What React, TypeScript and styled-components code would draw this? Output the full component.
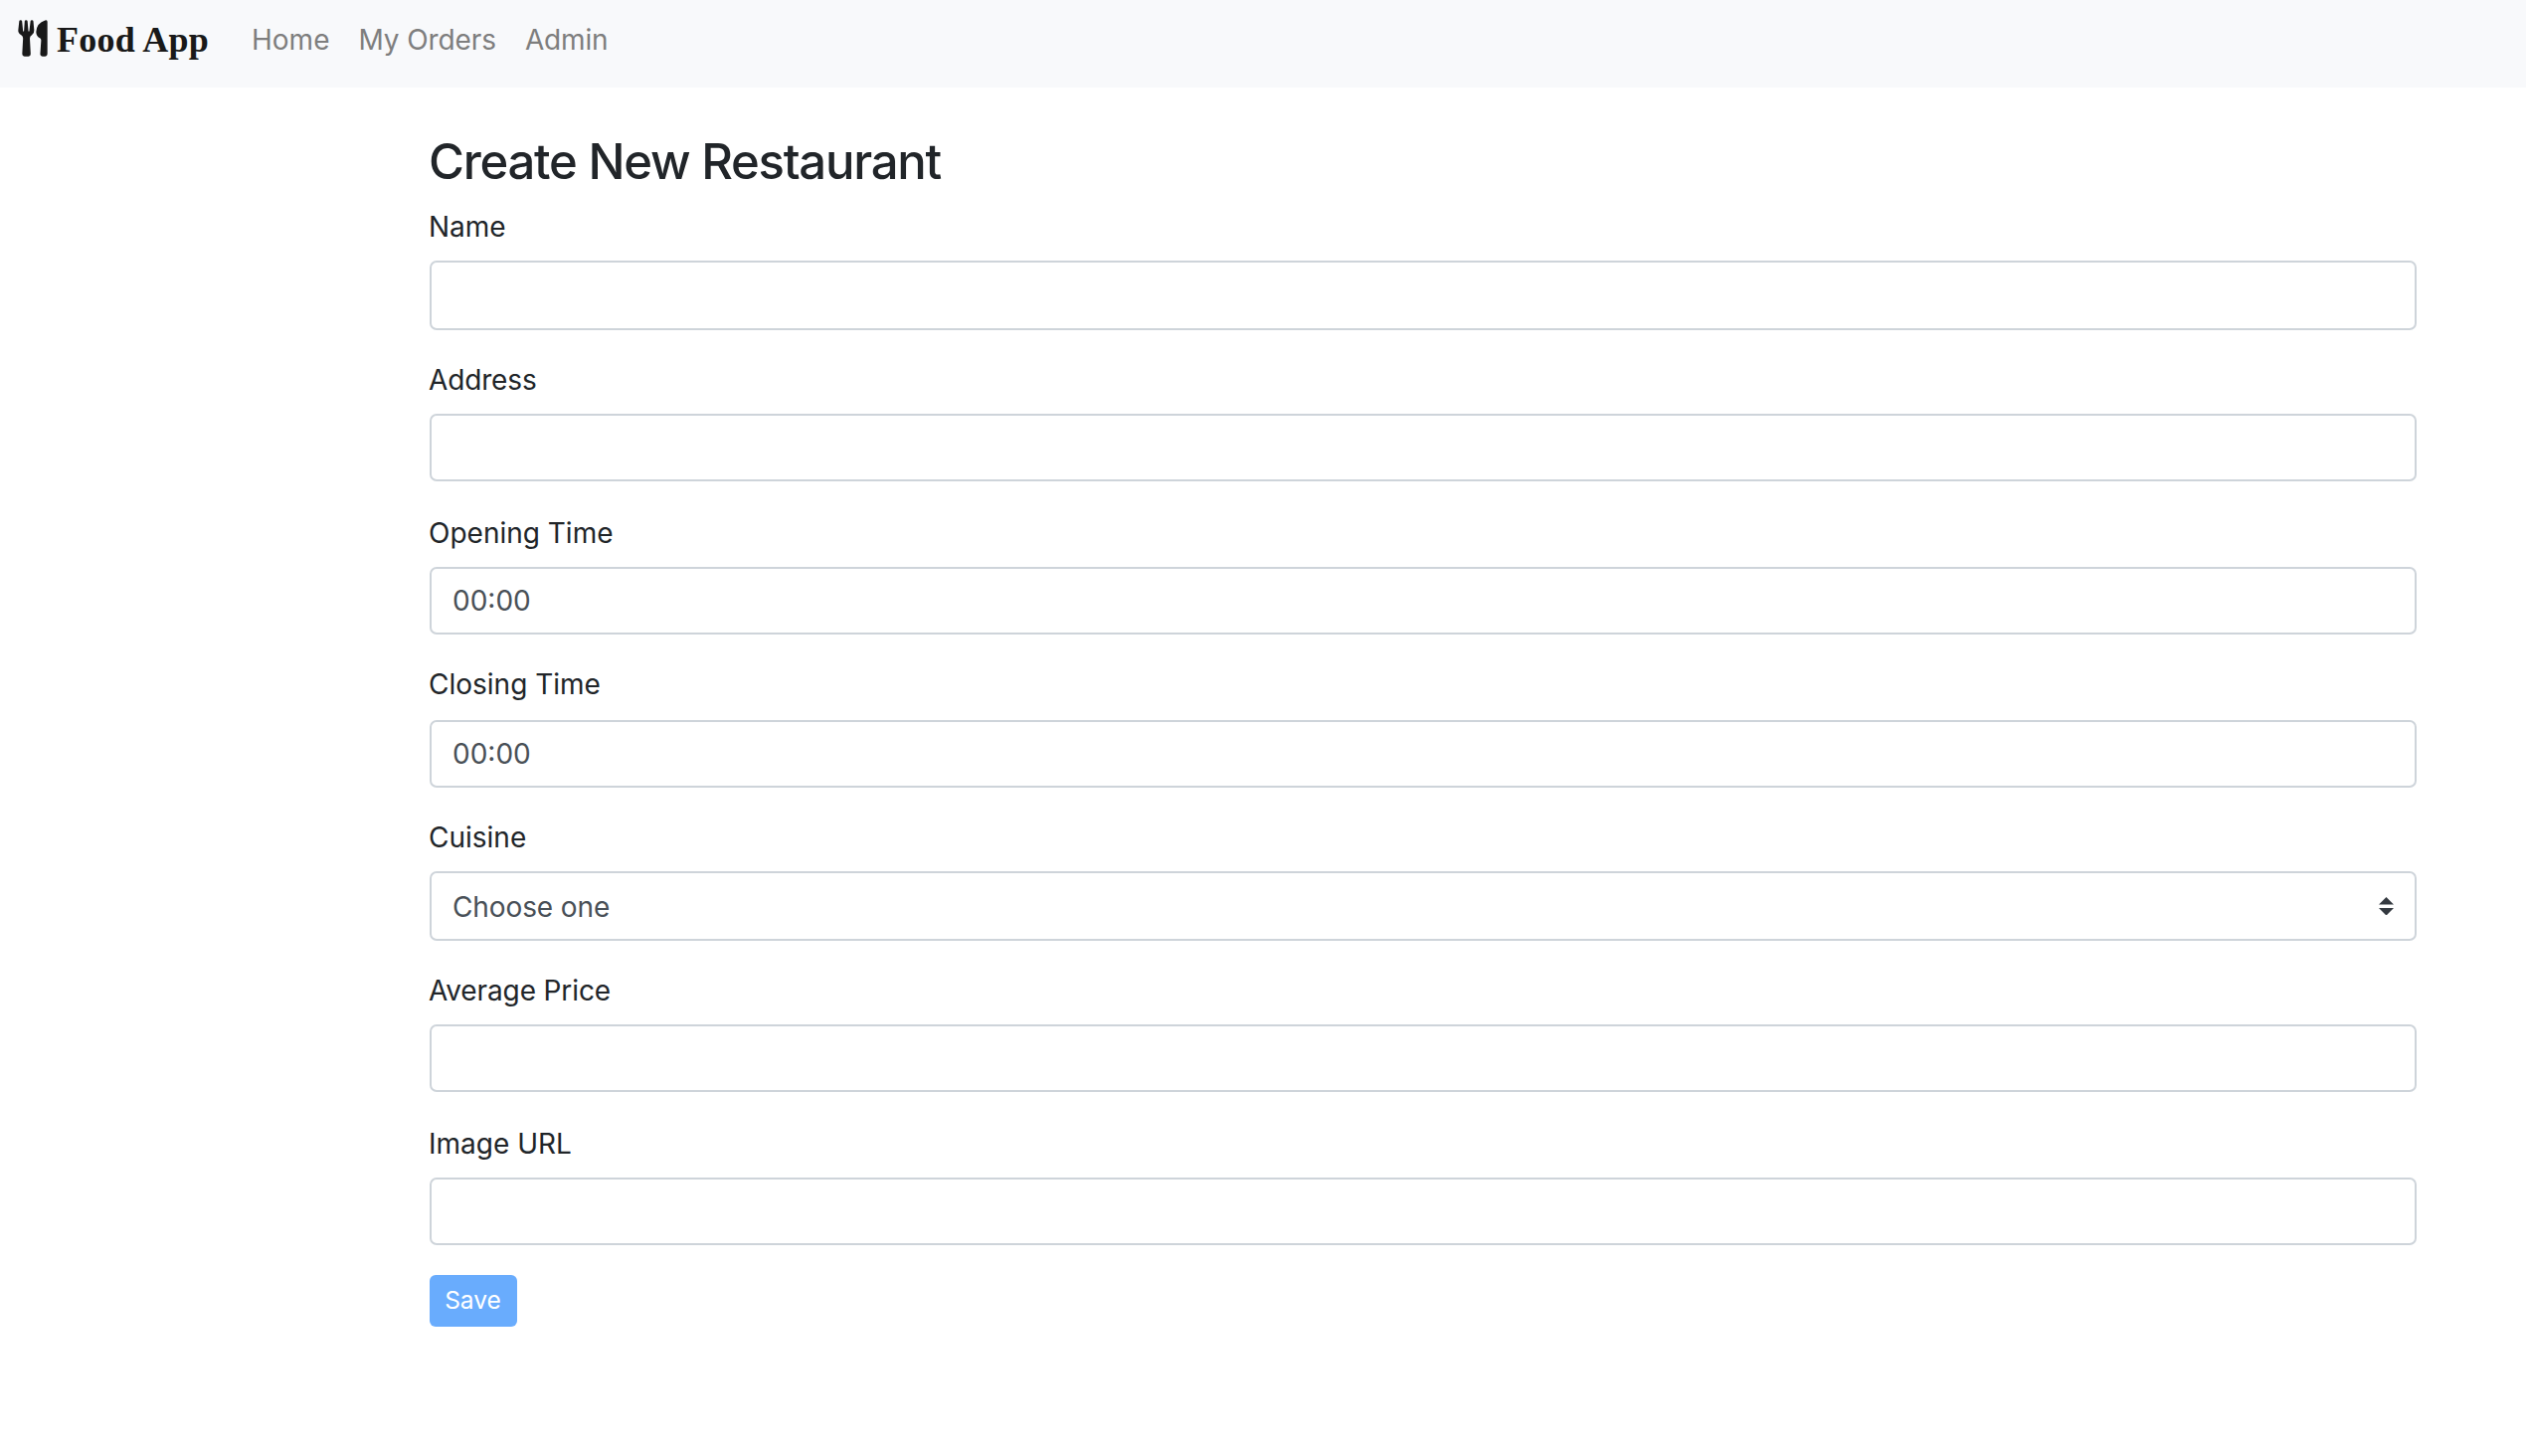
import styled, { createGlobalStyle } from "styled-components";

const GlobalStyle = createGlobalStyle`
  *, *::before, *::after {
    box-sizing: border-box;
  }
  body {
    margin: 0;
    background: #fff;
    color: #212529;
    font-family: Inter, "Liberation Sans", sans-serif;
    font-size: 28px;
    line-height: 24px;
  }
`;

const Navbar = styled.nav`
  display: flex;
  align-items: center;
  height: 88px;
  padding: 0 18px 8px;
  background: #f8f9fb;
`;

const Brand = styled.a`
  display: flex;
  align-items: center;
  gap: 9px;
  width: 235px;
  color: #191919;
  font: 700 36px/40px "Liberation Serif", "Times New Roman", serif;
  letter-spacing: 0.25px;
  text-decoration: none;
  white-space: nowrap;
`;

const BrandMark = styled.svg`
  width: 30px;
  height: 37px;
  margin-bottom: 3px;
  fill: currentColor;
`;

const NavLinks = styled.div`
  display: flex;
  gap: 29px;
`;

const NavLink = styled.a<{ $tracking?: number }>`
  color: #7e7e7e;
  letter-spacing: ${(p) => p.$tracking ?? 0}px;
  text-decoration: none;
  white-space: nowrap;
`;

const Main = styled.main`
  padding: 45px 110px 0 432px;
`;

const Title = styled.h2`
  margin: 0 0 23px -1px;
  font-size: 49px;
  font-weight: 500;
  line-height: 60px;
  letter-spacing: -1.24px;
`;

const Form = styled.form`
  display: flex;
  flex-direction: column;
  align-items: stretch;
`;

const Field = styled.div<{ $height: number }>`
  display: flex;
  flex-direction: column;
  height: ${(p) => p.$height}px;
`;

const Label = styled.label<{ $gap: number; $tracking: number }>`
  margin: 0 0 ${(p) => p.$gap}px -1px;
  letter-spacing: ${(p) => p.$tracking}px;
`;

const Input = styled.input<{ $height: number }>`
  width: 100%;
  height: ${(p) => p.$height}px;
  padding: 0 21px;
  border: 2px solid #ced4da;
  border-radius: 7px;
  background: #fff;
  color: #495057;
  font: inherit;
  outline: none;
`;

const Select = styled.div<{ $height: number }>`
  display: flex;
  align-items: center;
  justify-content: space-between;
  height: ${(p) => p.$height}px;
  padding: 0 21px;
  border: 2px solid #ced4da;
  border-radius: 7px;
  background: #fff;
  color: #495057;
  letter-spacing: -0.1px;
`;

const SelectValue = styled.span`
  padding-top: 2px;
`;

const Caret = styled.svg`
  width: 15px;
  height: 18.5px;
  fill: #343a40;
`;

const SaveButton = styled.button`
  align-self: flex-start;
  width: 88px;
  height: 52px;
  padding: 0 1px 2px 0;
  border: 0;
  border-radius: 6px;
  background: #69acfd;
  color: #fff;
  font: 400 24.5px/36px Inter, "Liberation Sans", sans-serif;
`;

type FieldSpec = {
  id: string;
  label: string;
  value?: string;
  select?: boolean;
  height?: number;
  control?: number;
  gap?: number;
  tracking?: number;
};

const fields: FieldSpec[] = [
  { id: "name", label: "Name", control: 70 },
  { id: "address", label: "Address", tracking: -0.15 },
  { id: "opening", label: "Opening Time", value: "00:00", height: 152 },
  { id: "closing", label: "Closing Time", value: "00:00", gap: 24 },
  { id: "cuisine", label: "Cuisine", value: "Choose one", select: true, control: 70 },
  { id: "price", label: "Average Price", tracking: -0.12 },
  { id: "image", label: "Image URL", height: 144 },
];

function ForkAndKnife() {
  return (
    <BrandMark viewBox="55 60 90 111" preserveAspectRatio="none" aria-hidden="true">
      <path d="M59 64Q59.500 61 63 61Q67 61 67.500 64L70.500 93Q71 95.500 72 95.500Q73.200 95.500 73.400 93L75.500 64Q76 61 79.500 61Q83.500 61 84 64L86.500 93Q86.800 95.500 88 95.500Q89.200 95.500 89.500 93L93 64Q93.500 61 97 61Q101 61 101.500 64L104 91Q105 100 97 106Q90.500 110 91 116L93.500 163Q93.500 170 87 170H75Q68 170 68 163L70.500 116Q71 110 65 106Q55 100 56 91Z" />
      <path d="M137 61.500Q144 59 144 66V163Q144 170 137 170H129Q122 170 122.300 163L125 123Q125.500 117 121 115Q110 109 110 96Q112 69 137 61.500Z" />
    </BrandMark>
  );
}

export default function App() {
  return (
    <>
      <GlobalStyle />
      <Navbar>
        <Brand>
          <ForkAndKnife />
          Food App
        </Brand>
        <NavLinks>
          <NavLink>Home</NavLink>
          <NavLink $tracking={-0.1}>My Orders</NavLink>
          <NavLink $tracking={-0.15}>Admin</NavLink>
        </NavLinks>
      </Navbar>
      <Main>
        <Title>Create New Restaurant</Title>
        <Form onSubmit={(e) => e.preventDefault()}>
          {fields.map((f) => (
            <Field key={f.id} $height={f.height ?? 154}>
              <Label htmlFor={f.id} $gap={f.gap ?? 22} $tracking={f.tracking ?? 0}>
                {f.label}
              </Label>
              {f.select ? (
                <Select id={f.id} $height={f.control ?? 68}>
                  <SelectValue>{f.value}</SelectValue>
                  <Caret viewBox="0 0 4 5" preserveAspectRatio="none">
                    <path d="M2 0L0 2h4zm0 5L0 3h4z" />
                  </Caret>
                </Select>
              ) : (
                <Input id={f.id} type="text" defaultValue={f.value} $height={f.control ?? 68} />
              )}
            </Field>
          ))}
          <SaveButton type="submit">Save</SaveButton>
        </Form>
      </Main>
    </>
  );
}
